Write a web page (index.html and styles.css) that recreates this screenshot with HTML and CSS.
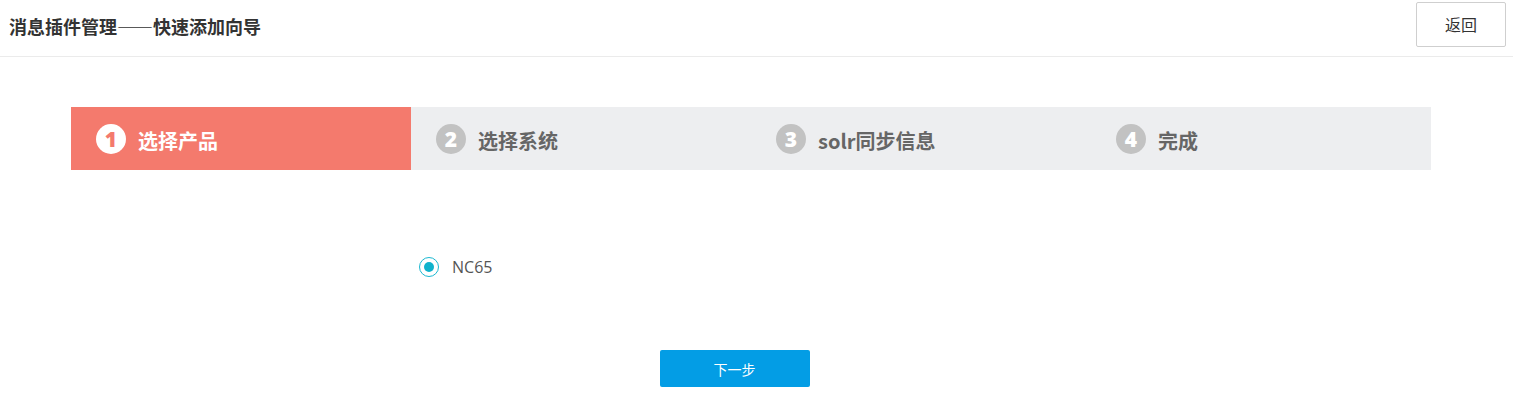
FILE: index.html
```html
<!DOCTYPE html>
<html lang="zh-CN">
<head>
<meta charset="utf-8">
<title>消息插件管理——快速添加向导</title>
<link rel="stylesheet" href="styles.css">
</head>
<body>
<div class="header">
  <div class="title">消息插件管理——快速添加向导</div>
  <button class="back-btn">返回</button>
</div>
<div class="wizard">
  <div class="steps">
    <div class="step active"><span class="num">1</span><span class="label">选择产品</span></div>
    <div class="step"><span class="num">2</span><span class="label">选择系统</span></div>
    <div class="step"><span class="num">3</span><span class="label">solr同步信息</span></div>
    <div class="step"><span class="num">4</span><span class="label">完成</span></div>
  </div>
  <div class="options">
    <label class="radio"><span class="radio-dot"></span><span class="radio-text">NC65</span></label>
  </div>
  <div class="actions">
    <button class="next-btn">下一步</button>
  </div>
</div>
</body>
</html>
```
FILE: styles.css
```css
* { box-sizing: border-box; }
body {
  margin: 0;
  font-family: "Noto Sans CJK SC", "Open Sans", sans-serif;
  background: #fff;
  color: #333;
}
.header {
  height: 57px;
  border-bottom: 1px solid #ebebeb;
  display: flex;
  align-items: center;
  justify-content: space-between;
  padding: 0 7px 0 9px;
}
.title {
  font-size: 18px;
  font-weight: 700;
  color: #333;
  margin-top: -5px;
}
.back-btn {
  width: 90px;
  height: 45px;
  border: 1px solid #cfcfcf;
  border-radius: 2px;
  background: #fff;
  font-family: inherit;
  font-size: 16px;
  color: #333;
  margin-top: -8px;
}
.wizard {
  padding: 50px 82px 0 71px;
}
.steps {
  display: flex;
  height: 63px;
  background: #edeef0;
}
.step {
  flex: 1;
  display: flex;
  align-items: center;
  padding-left: 25px;
  color: #666;
}
.step.active {
  background: #f47a6d;
  color: #fff;
}
.num {
  width: 30px;
  height: 30px;
  border-radius: 50%;
  background: #c2c2c2;
  color: #fff;
  font-family: "Open Sans", sans-serif;
  font-weight: 800;
  font-size: 21px;
  display: flex;
  align-items: center;
  justify-content: center;
  margin-right: 12px;
}
.step.active .num {
  background: #fff;
  color: #f47a6d;
}
.label {
  font-size: 20px;
  font-weight: 700;
  margin-top: 4px;
}
.options {
  padding: 86px 0 0 348px;
  height: 180px;
}
.radio {
  display: flex;
  align-items: center;
}
.radio-dot {
  width: 20px;
  height: 20px;
  border-radius: 50%;
  border: 1px solid #1bb8d1;
  display: flex;
  align-items: center;
  justify-content: center;
  margin-right: 13px;
}
.radio-dot::after {
  content: "";
  width: 10px;
  height: 10px;
  border-radius: 50%;
  background: #0fb2cc;
}
.radio-text {
  font-size: 16px;
  color: #555;
  font-family: "Open Sans", sans-serif;
}
.actions {
  display: flex;
  justify-content: center;
  padding-right: 33px;
}
.next-btn {
  width: 150px;
  height: 37px;
  border: none;
  border-radius: 2px;
  background: #039de5;
  color: #fff;
  font-family: inherit;
  font-size: 14px;
}
```
